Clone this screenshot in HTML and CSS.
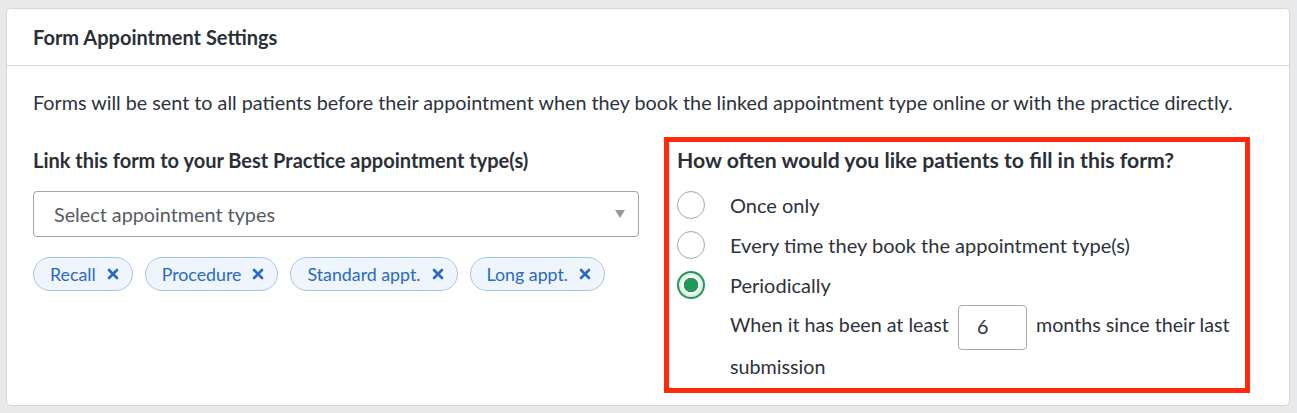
FILE: index.html
```html
<!DOCTYPE html>
<html lang="en">
<head>
<meta charset="utf-8">
<title>Form Appointment Settings</title>
<link rel="stylesheet" href="styles.css">
</head>
<body>
<div class="page">
  <section class="card">
    <header class="card-header">Form Appointment Settings</header>
    <div class="card-body">
      <p class="desc">Forms will be sent to all patients before their appointment when they book the linked appointment type online or with the practice directly.</p>
      <div class="cols">
        <div class="col-left">
          <div class="label">Link this form to your Best Practice appointment type(s)</div>
          <div class="select">
            <span class="placeholder">Select appointment types</span>
            <span class="caret"></span>
          </div>
          <div class="chips">
            <span class="chip">Recall <svg class="x" viewBox="0 0 12 12"><path d="M2 2L10 10M10 2L2 10"/></svg></span>
            <span class="chip">Procedure <svg class="x" viewBox="0 0 12 12"><path d="M2 2L10 10M10 2L2 10"/></svg></span>
            <span class="chip">Standard appt. <svg class="x" viewBox="0 0 12 12"><path d="M2 2L10 10M10 2L2 10"/></svg></span>
            <span class="chip">Long appt. <svg class="x" viewBox="0 0 12 12"><path d="M2 2L10 10M10 2L2 10"/></svg></span>
          </div>
        </div>
        <div class="col-right">
          <div class="label label-q">How often would you like patients to fill in this form?</div>
          <div class="radio-row"><span class="radio"></span><span>Once only</span></div>
          <div class="radio-row"><span class="radio"></span><span>Every time they book the appointment type(s)</span></div>
          <div class="radio-row"><span class="radio checked"></span><span>Periodically</span></div>
          <div class="sub"><span>When it has been at least</span> <span class="num">6</span> <span>months since their last</span> <span>submission</span></div>
        </div>
      </div>
    </div>
  </section>
</div>
</body>
</html>
```
FILE: styles.css
```css
* { box-sizing: border-box; }
html, body { margin: 0; padding: 0; }
body {
  background: #e8e9eb;
  font-family: Lato, "Open Sans", sans-serif;
  color: #2d323c;
}
.page {
  padding: 8px 7px 8px 6px;
}
.card {
  background: #fff;
  border: 1px solid #d5d7da;
  border-radius: 5px;
}
.card-header {
  height: 57px;
  border-bottom: 1px solid #d5d7da;
  padding: 0 26px;
  display: flex;
  align-items: center;
  font-weight: 700;
  font-size: 20px;
  color: #2b2f38;
}
.card-body {
  padding: 25px 26px 12px 26px;
}
.desc {
  margin: 0;
  font-size: 19.75px;
  line-height: 24px;
}
.cols {
  margin-top: 22px;
  display: flex;
  gap: 25px;
}
.col-left {
  width: 606px;
  padding-top: 11px;
}
.col-right {
  width: 586px;
  border: 5px solid #ff2a0a;
  padding: 6px 4px 1px 8px;
}
.label {
  font-weight: 700;
  font-size: 20px;
  line-height: 24px;
  color: #2b2f38;
}
.label-q {
  font-size: 21.2px;
  margin-bottom: 13px;
}
.select {
  margin-top: 19px;
  height: 46px;
  border: 1px solid #a3a5a8;
  border-radius: 4px;
  display: flex;
  align-items: center;
  justify-content: space-between;
  padding: 0 13px 0 20px;
}
.placeholder {
  font-size: 19.8px;
  color: #555a62;
}
.caret {
  width: 0;
  height: 0;
  border-left: 5px solid transparent;
  border-right: 5px solid transparent;
  border-top: 8px solid #9a9a9a;
}
.chips {
  margin-top: 20px;
  display: flex;
  gap: 12px;
}
.chip {
  height: 34px;
  display: inline-flex;
  align-items: center;
  padding: 0 13px 0 16px;
  border: 1px solid #a8c6ec;
  border-radius: 17px;
  background: #eef5fd;
  color: #2a69c4;
  font-size: 17.8px;
}
.x {
  width: 12px;
  height: 12px;
  margin-left: 11px;
  fill: none;
  stroke: #2a69c4;
  stroke-width: 2.6;
  stroke-linecap: round;
}
.radio-row {
  height: 40px;
  display: flex;
  align-items: center;
  gap: 25px;
  font-size: 20px;
}
.radio {
  flex: none;
  width: 28px;
  height: 28px;
  border-radius: 50%;
  border: 1px solid #a6a8ab;
  background: #fff;
}
.radio.checked {
  border: 2.5px solid #1f9a57;
  background: radial-gradient(circle, #1f9a57 0 7px, #fff 7.5px);
  box-shadow: inset 0 0 3px 2px rgba(0,0,0,0.12);
}
.sub {
  padding-left: 53px;
  font-size: 19.7px;
  line-height: 40px;
}
.num {
  display: inline-block;
  width: 69px;
  height: 45px;
  border: 1px solid #a6a8ab;
  border-radius: 4px;
  padding-left: 18px;
  line-height: 41px;
  vertical-align: middle;
  margin: -3px 4px;
}
```
